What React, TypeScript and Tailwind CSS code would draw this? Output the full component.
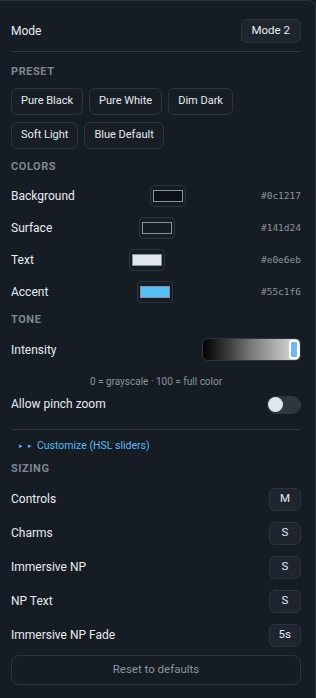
import React from 'react'

const presets = ['Pure Black', 'Pure White', 'Dim Dark', 'Soft Light', 'Blue Default']

const colors = [
  { label: 'Background', value: '#0c1217' },
  { label: 'Surface', value: '#141d24' },
  { label: 'Text', value: '#e0e6eb' },
  { label: 'Accent', value: '#55c1f6' },
]

const sizing = [
  { label: 'Controls', value: 'M' },
  { label: 'Charms', value: 'S' },
  { label: 'Immersive NP', value: 'S' },
  { label: 'NP Text', value: 'S' },
  { label: 'Immersive NP Fade', value: '5s' },
]

function Heading({ children }: { children: React.ReactNode }) {
  return <h3 className="text-[11px] leading-[17px] font-bold tracking-[0.05em] text-[#7d8691]">{children}</h3>
}

export default function App() {
  return (
    <div
      className="h-[698px] w-[316px] overflow-hidden bg-[#161c24] text-[#e6ebf0]"
      style={{ fontFamily: 'Roboto, "Noto Sans", sans-serif' }}
    >
      <div className="h-full rounded-tr-lg border-t border-r border-[#2c333c] px-[11px] pr-[14px]">
        {/* Mode */}
        <div className="flex items-center justify-between pt-[18px] pb-[8px]">
          <span className="text-[12px] leading-[19px]">Mode</span>
          <button className="h-6 rounded-md border border-[#2c343e] bg-[#1e252e] px-[10px] text-[11.5px]">Mode 2</button>
        </div>
        <div className="border-t border-[#2f3640]" />

        {/* Preset */}
        <div className="mt-[11px]">
          <Heading>PRESET</Heading>
          <div className="mt-[8px] flex flex-wrap gap-x-[6px] gap-y-[7px]">
            {presets.map(p => (
              <button
                key={p}
                className="h-[27px] rounded-md border border-[#2c343e] bg-[#181e26] px-[9px] text-[11px]"
              >
                {p}
              </button>
            ))}
          </div>
        </div>

        {/* Colors */}
        <div className="mt-[9px]">
          <Heading>COLORS</Heading>
          <div className="mt-[10px] flex flex-col gap-[10px]">
            {colors.map(c => (
              <div key={c.label} className="flex h-[22px] items-center justify-between">
                <span className="text-[12px]">{c.label}</span>
                <div className="flex h-[22px] w-[36px] items-center justify-center rounded border border-[#2c343e] bg-[#161c24]">
                  <div className="h-[12px] w-[30px] border border-[#8a9099]" style={{ background: c.value }} />
                </div>
                <span className="text-[9.5px] text-[#8b939c]" style={{ fontFamily: '"DejaVu Sans Mono", monospace' }}>
                  {c.value}
                </span>
              </div>
            ))}
          </div>
        </div>

        {/* Tone */}
        <div className="mt-[8px]">
          <Heading>TONE</Heading>
          <div className="mt-[10px] flex items-center justify-between">
            <span className="text-[12px]">Intensity</span>
            <div className="relative h-[23px] w-[99px] rounded-md border border-[#2c343e] bg-gradient-to-r from-[#050505] via-[#7a7a7a] to-[#e6e6e6]">
              <div className="absolute top-[1px] right-[1px] h-[19px] w-[10px] rounded-[3px] border-2 border-white bg-[#6ab8f4]" />
            </div>
          </div>
          <p className="mt-[13px] text-center text-[10px] leading-[16px] text-[#8b939c]">0 = grayscale · 100 = full color</p>
          <div className="mt-[5px] flex items-center justify-between">
            <span className="text-[12px] leading-[19.5px]">Allow pinch zoom</span>
            <div className="flex h-[18px] w-[34px] items-center rounded-full bg-[#2f3640] pl-[1px]">
              <div className="h-[15px] w-[15px] rounded-full bg-[#e0e6eb]" />
            </div>
          </div>
        </div>

        <div className="mt-[14px] border-t border-[#2f3640]" />
        <div className="mt-[7px] flex items-center gap-[5px] pl-[8px] text-[10.5px] leading-[18px] text-[#5bb8f0]">
          <span className="text-[7px]">▸</span>
          <span className="text-[7px]">▸</span>
          <span>Customize (HSL sliders)</span>
        </div>

        {/* Sizing */}
        <div className="mt-[5px]">
          <Heading>SIZING</Heading>
          <div className="mt-[11px] flex flex-col gap-[11px]">
            {sizing.map(s => (
              <div key={s.label} className="flex h-[23px] items-center justify-between">
                <span className="text-[12px]">{s.label}</span>
                <button className="h-[23px] min-w-[32px] rounded-md border border-[#2c343e] bg-[#1e252e] px-[9px] text-[11.5px]">
                  {s.value}
                </button>
              </div>
            ))}
          </div>
        </div>

        <button className="mt-[8px] h-[30px] w-full rounded-lg border border-[#2c343e] bg-[#161c24] text-[11.5px] text-[#8b939c]">
          Reset to defaults
        </button>
      </div>
    </div>
  )
}
